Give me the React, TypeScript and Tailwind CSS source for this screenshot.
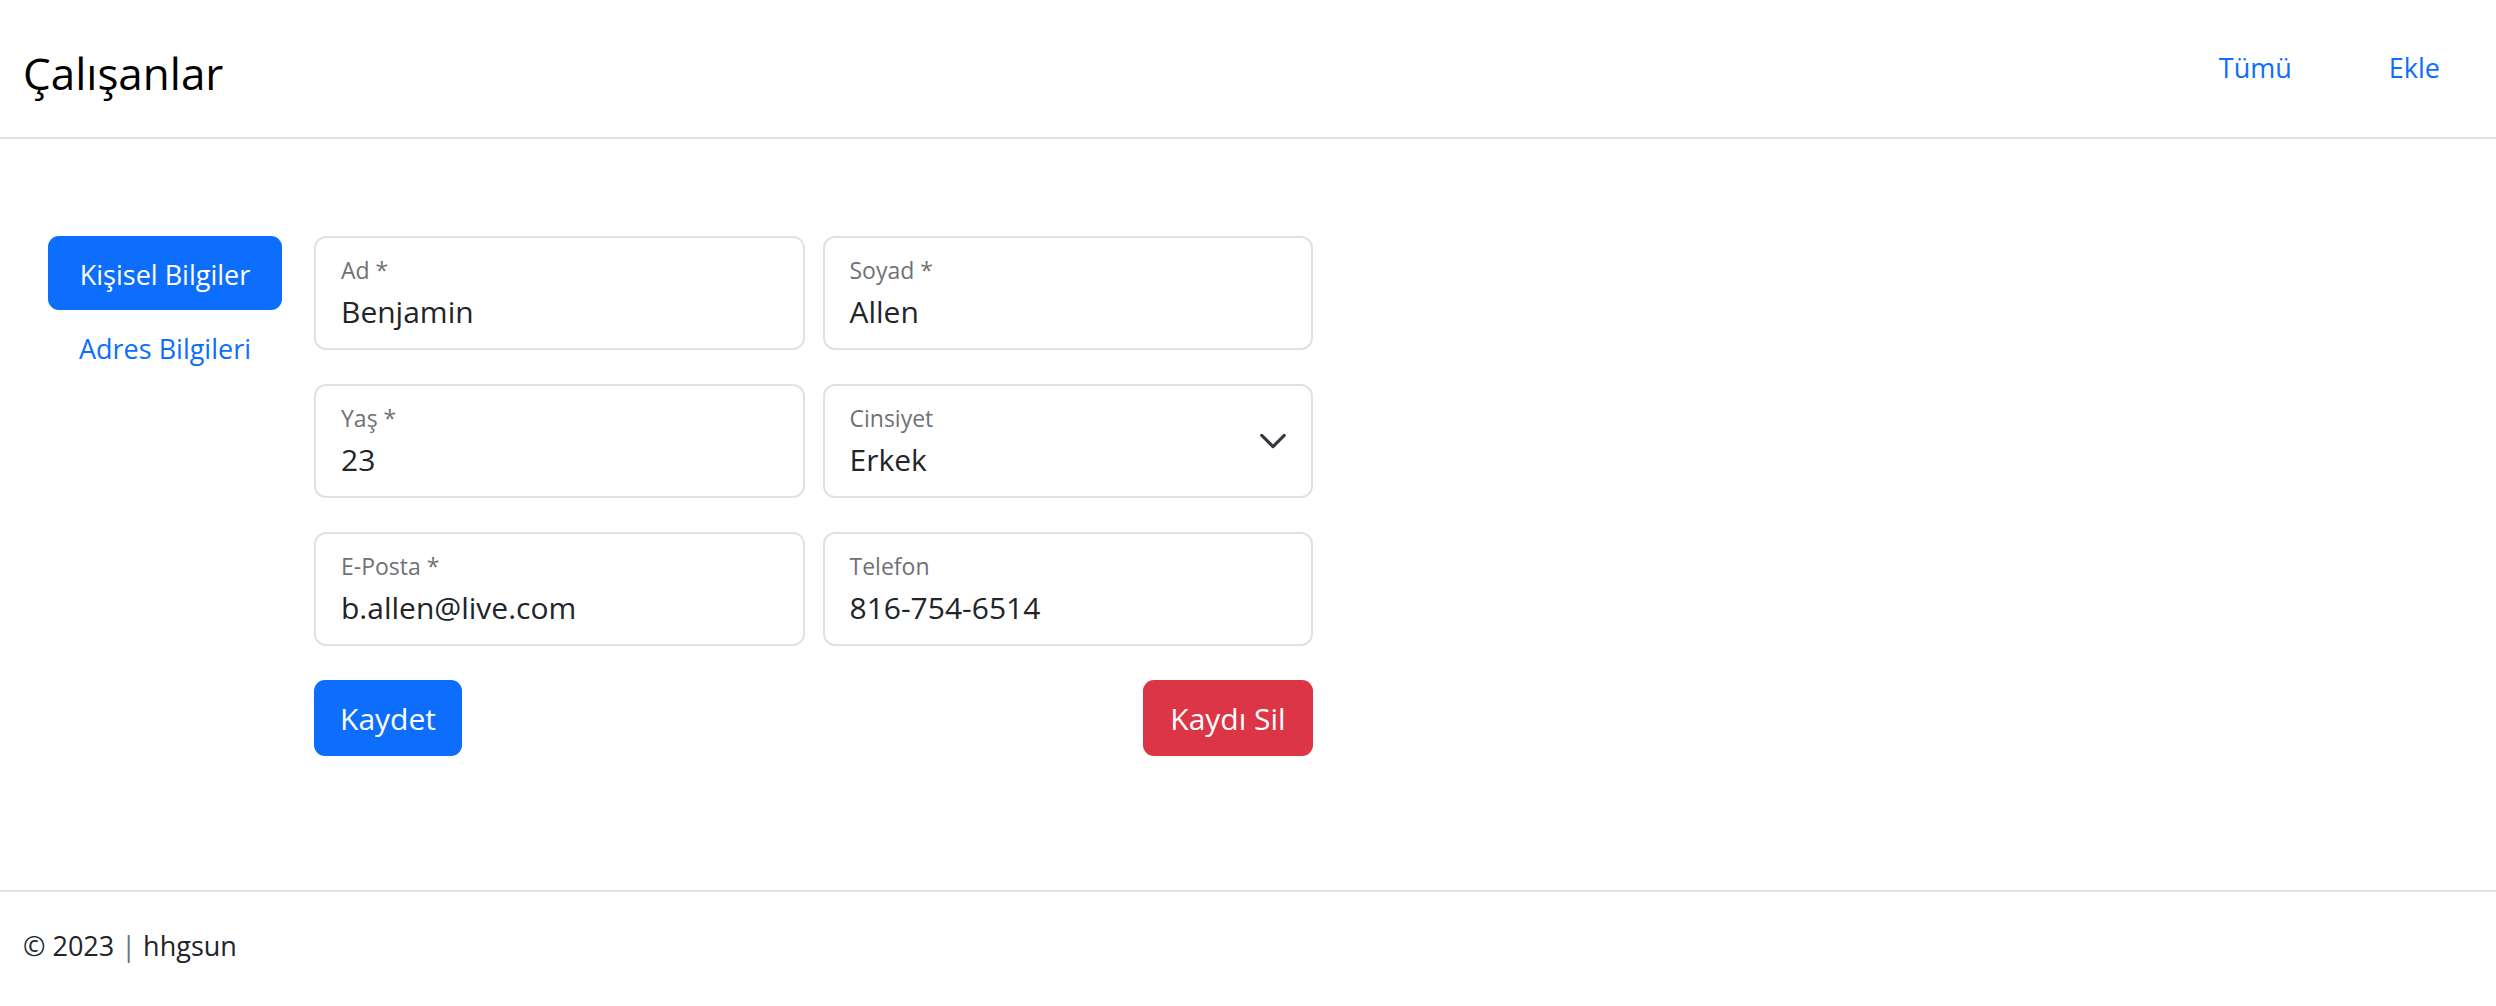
import { ReactNode } from 'react';

interface Field {
  label: string;
  value: string;
  select?: boolean;
}

const rows: Field[][] = [
  [
    { label: 'Ad *', value: 'Benjamin' },
    { label: 'Soyad *', value: 'Allen' },
  ],
  [
    { label: 'Yaş *', value: '23' },
    { label: 'Cinsiyet', value: 'Erkek', select: true },
  ],
  [
    { label: 'E-Posta *', value: 'b.allen@live.com' },
    { label: 'Telefon', value: '816-754-6514' },
  ],
];

function FloatingField({ field }: { field: Field }) {
  return (
    <div className="relative h-[114px] rounded-[12px] border-2 border-[#dee2e6] bg-white px-[25px] pt-[18px]">
      <div className="text-[23px] leading-[28px] text-[#6f7174]">{field.label}</div>
      <div className="mt-[10px] text-[30px] leading-[36px] text-[#212529]">{field.value}</div>
      {field.select && (
        <svg
          className="absolute right-[23px] top-1/2 -translate-y-1/2"
          width="30"
          height="30"
          viewBox="0 0 16 16"
          fill="none"
          stroke="#343a40"
          strokeWidth="1.7"
          strokeLinecap="round"
          strokeLinejoin="round"
        >
          <path d="m2 5 6 6 6-6" />
        </svg>
      )}
    </div>
  );
}

function NavItem({ active, children }: { active?: boolean; children: ReactNode }) {
  return (
    <div
      className={`flex h-[74px] items-center justify-center rounded-[11px] pt-[4px] text-[27px] ${
        active ? 'bg-[#0d6efd] text-white' : 'text-[#0d6efd]'
      }`}
    >
      {children}
    </div>
  );
}

export default function App() {
  return (
    <div className="flex min-h-screen flex-col bg-white font-['Open_Sans',sans-serif] text-[#212529]">
      <header className="flex h-[139px] items-center justify-between border-b-2 border-[#dee2e6] pl-[23px] pr-[56px]">
        <h1 className="mt-[8px] text-[44px] font-normal text-black">Çalışanlar</h1>
        <nav className="flex items-center gap-[97px] text-[27px] text-[#0d6efd]">
          <a>Tümü</a>
          <a>Ekle</a>
        </nav>
      </header>

      <main className="flex flex-1 gap-[32px] pl-[48px] pt-[97px]">
        <div className="flex w-[234px] flex-col">
          <NavItem active>Kişisel Bilgiler</NavItem>
          <NavItem>Adres Bilgileri</NavItem>
        </div>

        <div className="flex w-[999px] flex-col gap-[34px]">
          {rows.map((row, i) => (
            <div key={i} className="grid grid-cols-2 gap-[18px]">
              {row.map((f) => (
                <FloatingField key={f.label} field={f} />
              ))}
            </div>
          ))}
          <div className="flex justify-between">
            <button className="h-[76px] w-[148px] rounded-[11px] bg-[#0d6efd] text-[30px] text-white">
              Kaydet
            </button>
            <button className="h-[76px] w-[170px] rounded-[11px] bg-[#dc3545] text-[30px] text-white">
              Kaydı Sil
            </button>
          </div>
        </div>
      </main>

      <footer className="h-[116px] border-t-2 border-[#dee2e6] pl-[23px] pt-[34px]">
        <p className="text-[27px] leading-[40px] text-[#212529]">
          © 2023 <span className="text-[#6c757d]">|</span> hhgsun
        </p>
      </footer>
    </div>
  );
}
